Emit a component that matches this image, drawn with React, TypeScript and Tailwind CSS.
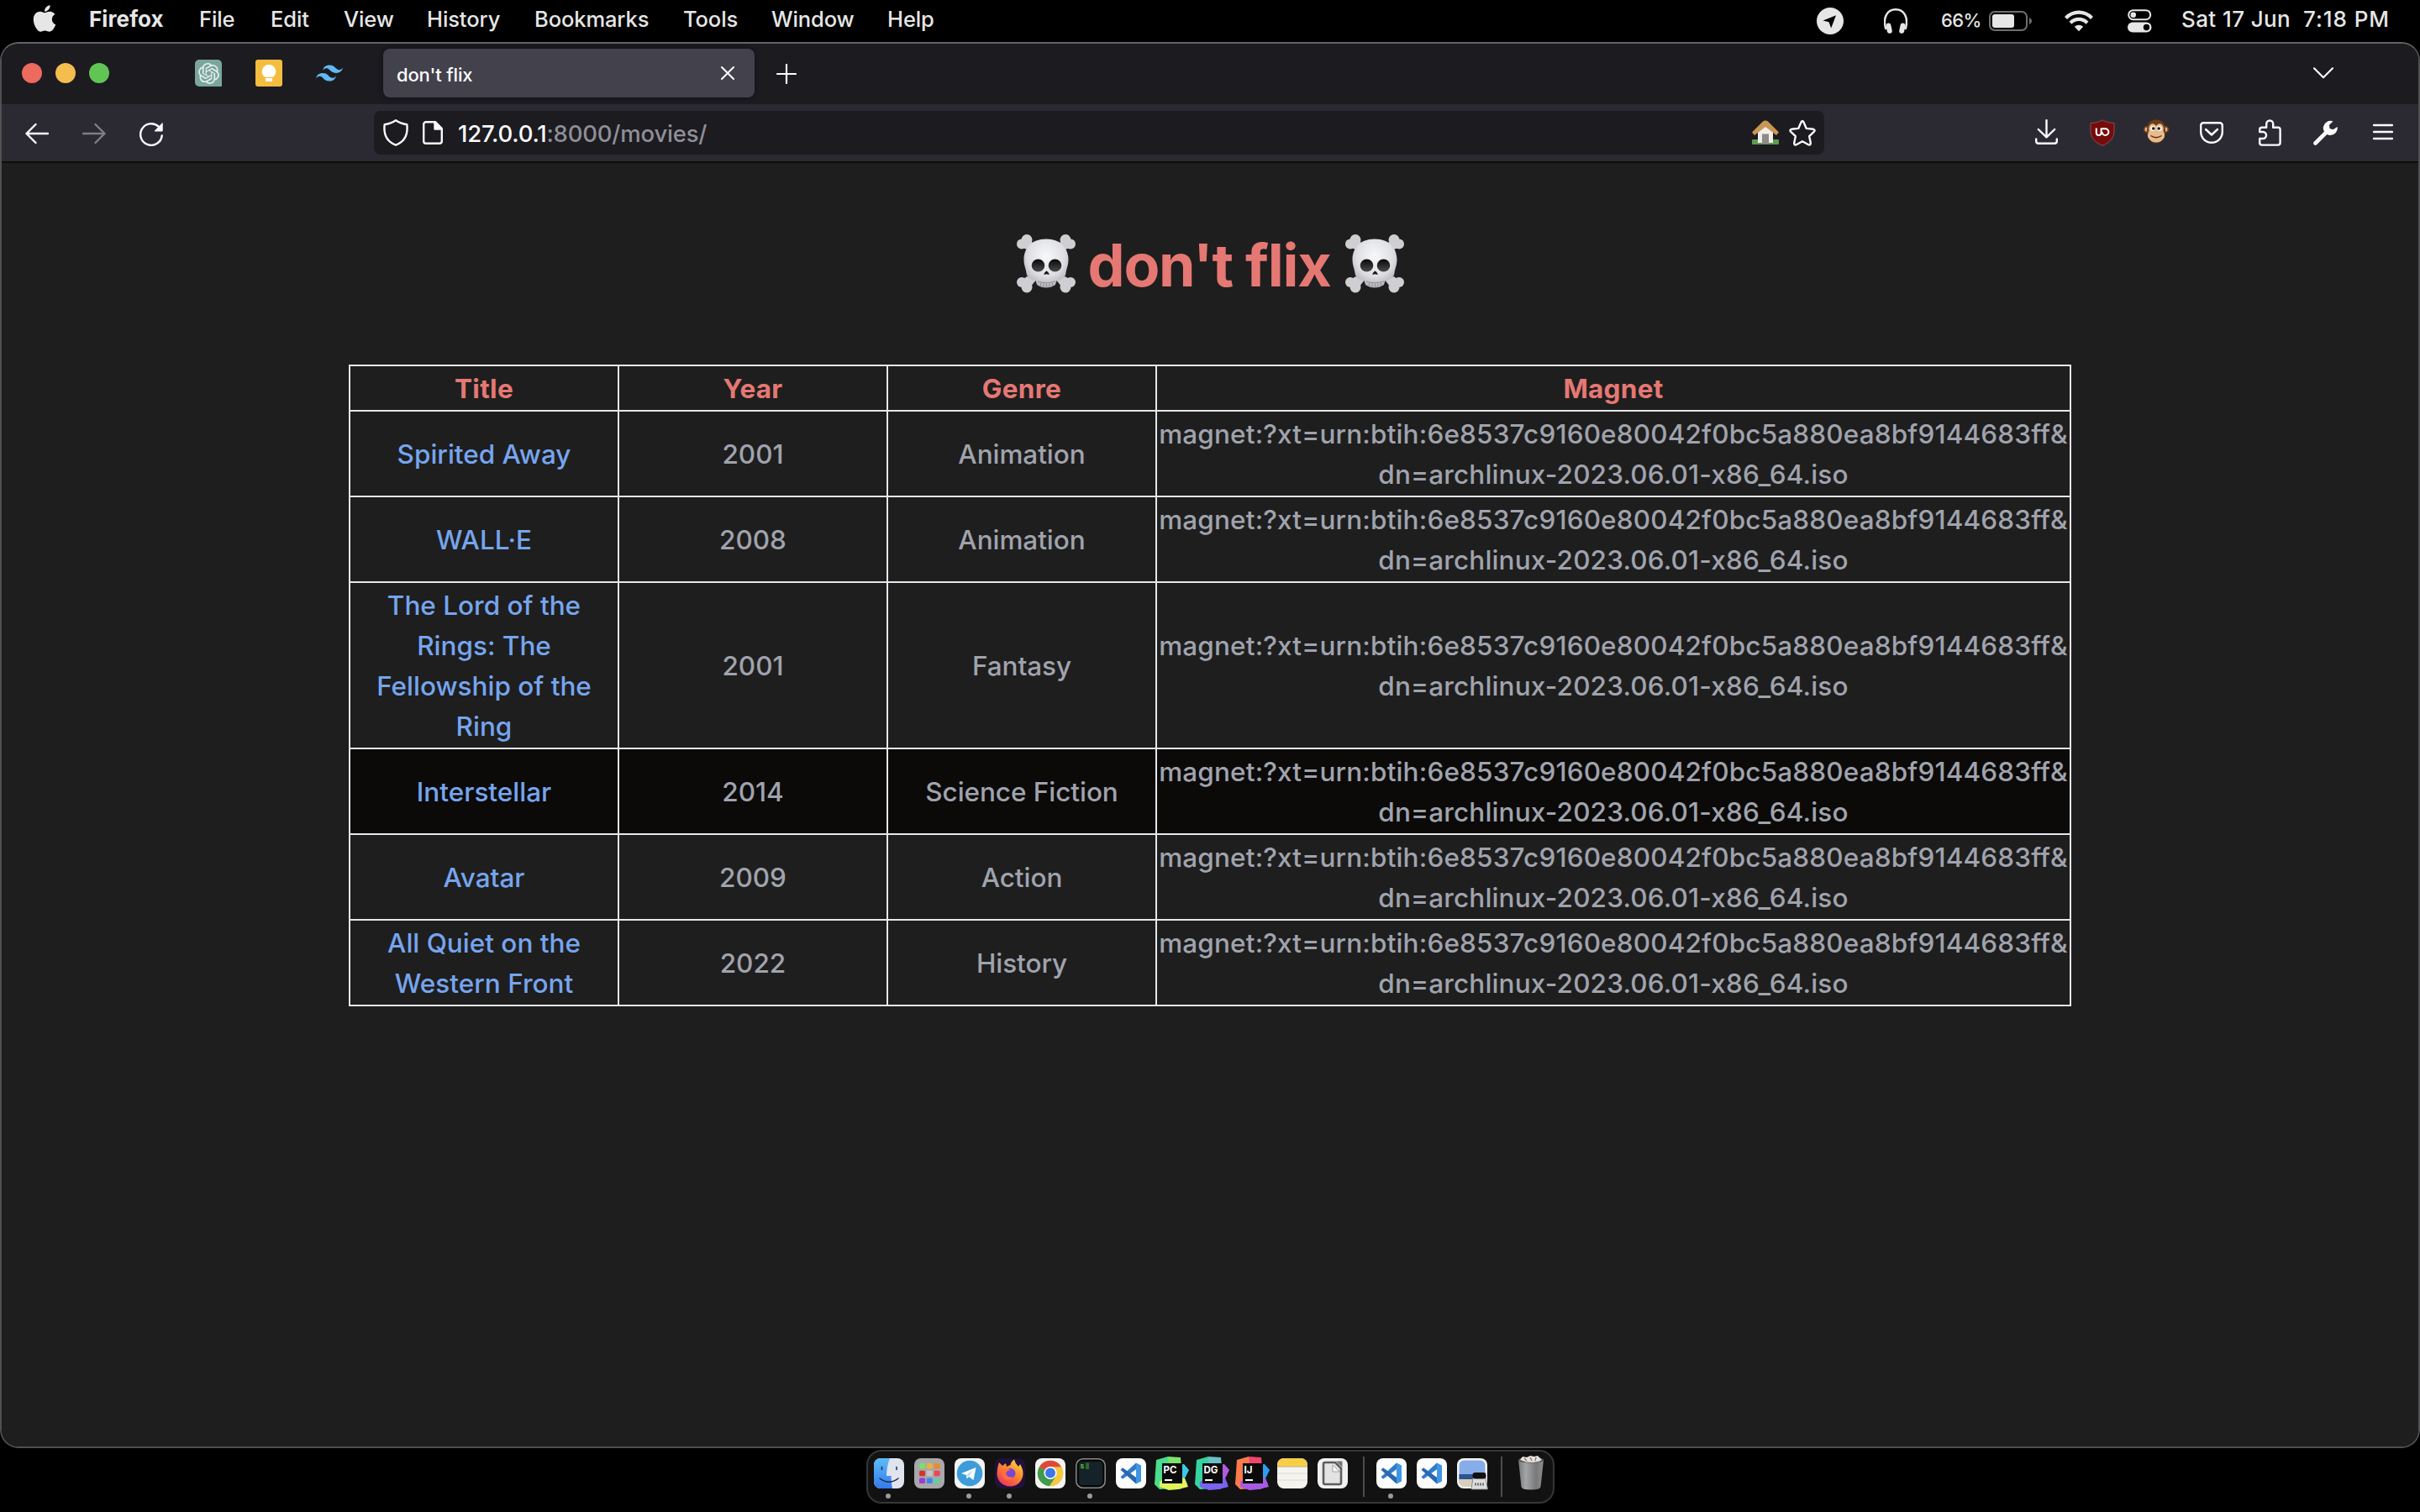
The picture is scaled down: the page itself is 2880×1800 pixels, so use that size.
import type { ReactNode } from "react";
import { FaApple } from "react-icons/fa";
import { SiOpenai, SiTailwindcss } from "react-icons/si";

const MENU: { label: string; cls: string }[] = [
  { label: "File", cls: "w-[85px]" },
  { label: "Edit", cls: "w-[87px]" },
  { label: "View", cls: "w-[99px]" },
  { label: "History", cls: "w-[128px]" },
  { label: "Bookmarks", cls: "w-[177px]" },
  { label: "Tools", cls: "w-[105px]" },
  { label: "Window", cls: "w-[138px]" },
  { label: "Help", cls: "w-[80px]" },
];

const MOVIES = [
  { title: "Spirited Away", year: "2001", genre: "Animation" },
  { title: "WALL·E", year: "2008", genre: "Animation" },
  { title: "The Lord of the Rings: The Fellowship of the Ring", year: "2001", genre: "Fantasy", tall: true },
  { title: "Interstellar", year: "2014", genre: "Science Fiction", active: true },
  { title: "Avatar", year: "2009", genre: "Action" },
  { title: "All Quiet on the Western Front", year: "2022", genre: "History" },
];

function Headphones() {
  return (
    <svg className="h-[30px] w-[28px]" viewBox="0 0 28 30" fill="none">
      <path d="M2.500 25C-2 11 4 1.300 14 1.300S30 11 25.500 25" stroke="#e6e6e6" strokeWidth="2.400" />
      <rect x="3.200" y="17.500" width="6" height="12.400" rx="3" transform="rotate(-12 6 24)" fill="#e6e6e6" />
      <rect x="18.800" y="17.500" width="6" height="12.400" rx="3" transform="rotate(12 22 24)" fill="#e6e6e6" />
    </svg>
  );
}

function Wifi() {
  return (
    <svg className="h-[26px] w-[34px]" viewBox="0 0 34 26" fill="none" stroke="#e6e6e6" strokeWidth="4.200">
      <path d="M1.500 9.500C10 .3 24 .3 32.500 9.500" />
      <path d="M7 15.300C12.500 9.500 21.500 9.500 27 15.300" />
      <path d="M17 25.300 11.800 19.800C14.800 17 19.200 17 22.200 19.800Z" fill="#e6e6e6" stroke="none" />
    </svg>
  );
}

function ControlCenter() {
  return (
    <svg className="h-[28px] w-[29px]" viewBox="0 0 29 28">
      <rect x="1.200" y="1.200" width="26" height="11" rx="5.500" fill="none" stroke="#e6e6e6" strokeWidth="2" />
      <circle cx="6.800" cy="6.700" r="3.300" fill="#e6e6e6" />
      <rect x="0" y="15.500" width="28.500" height="12" rx="6" fill="#e6e6e6" />
      <circle cx="22.500" cy="21.500" r="3.700" fill="#000" />
    </svg>
  );
}

function MenuBar() {
  return (
    <div className="flex h-[50px] shrink-0 items-center bg-black text-[25.500px] font-[450] leading-[46px] text-[#e6e6e6]">
      <FaApple className="mb-[6px] ml-[35px] h-[36px] w-[36px] shrink-0" />
      <span className="-mt-[4px] ml-[35px] w-[131px] text-[26px] font-bold tracking-[0.100px]">Firefox</span>
      {MENU.map((m) => (
        <span key={m.label} className={`${m.cls} -mt-[4px] shrink-0 whitespace-nowrap tracking-[-0.100px]`}>
          {m.label}
        </span>
      ))}
      <div className="ml-auto flex items-center">
        <svg className="h-[32px] w-[32px]" viewBox="0 0 32 32">
          <circle cx="16" cy="16" r="16" fill="#e6e6e6" />
          <path d="M23 9.200 7.500 15.500 14.500 17.300 17.200 24.600Z" fill="#000" />
        </svg>
        <div className="ml-[48px]">
          <Headphones />
        </div>
        <span className="-mt-[2px] ml-[40px] w-[57px] text-[22px] font-medium tracking-[-0.600px]">66%</span>
        <svg className="h-[24px] w-[52px]" viewBox="0 0 52 24">
          <rect x="1" y="1" width="44" height="22" rx="6" fill="none" stroke="#6e6e6e" strokeWidth="2" />
          <rect x="4" y="4" width="26" height="16" rx="3" fill="#e6e6e6" />
          <path d="M48 8C52 9.500 52 14.500 48 16Z" fill="#6e6e6e" />
        </svg>
        <div className="ml-[38px]">
          <Wifi />
        </div>
        <div className="ml-[41px]">
          <ControlCenter />
        </div>
        <span className="-mt-[4px] ml-[35px] w-[145px] whitespace-nowrap text-[26px] tracking-[0.400px]">Sat 17 Jun</span>
        <span className="-mt-[4px] w-[139px] whitespace-nowrap text-[26px] tracking-[0.950px]">7:18 PM</span>
      </div>
    </div>
  );
}

function TabBar() {
  return (
    <div className="flex h-[72px] items-center bg-[#1c1b20] pb-[2px]">
      <div className="ml-[24px] flex gap-[16px]">
        <span className="size-[24px] rounded-full bg-[#ed6a5e]" />
        <span className="size-[24px] rounded-full bg-[#f4be4f]" />
        <span className="size-[24px] rounded-full bg-[#61c554]" />
      </div>
      <div className="ml-[102px] flex size-[32px] items-center justify-center rounded-[5px] rounded-br-none bg-[#7ba69b]">
        <SiOpenai className="size-[25px] text-[#e4efec]" />
      </div>
      <svg className="ml-[40px] size-[32px]" viewBox="0 0 32 32">
        <rect width="32" height="32" rx="3" fill="#f4bd3f" />
        <path d="M16 6a8.200 8.200 0 0 1 5 14.700H11A8.200 8.200 0 0 1 16 6Z" fill="#fff" />
        <rect x="12" y="22" width="8" height="4" fill="#fff" />
      </svg>
      <SiTailwindcss className="ml-[40px] size-[32px] text-[#62b8f2]" />
      <div className="ml-[48px] flex h-[58px] w-[442px] items-center rounded-[8px] bg-[#42414c] shadow-[0_0_6px_rgba(0,0,0,0.4)]">
        <span className="ml-[16px] mt-[4px] text-[22px] font-[450] tracking-[-0.150px] text-[#fbfbfe]">don't flix</span>
        <svg className="ml-auto mr-[24px] size-[16px]" viewBox="0 0 16 16" stroke="#fbfbfe" strokeWidth="2" strokeLinecap="round">
          <path d="M1 1 15 15M15 1 1 15" />
        </svg>
      </div>
      <svg className="ml-[26px] mt-[2px] size-[24px]" viewBox="0 0 24 24" stroke="#fbfbfe" strokeWidth="2.200" strokeLinecap="round">
        <path d="M12 1V23M1 12H23" />
      </svg>
      <svg className="ml-auto mr-[101px] h-[14px] w-[24px]" viewBox="0 0 24 14" fill="none" stroke="#fbfbfe" strokeWidth="2.200" strokeLinecap="round" strokeLinejoin="round">
        <path d="M1 1.300 12 12.300 23 1.300" />
      </svg>
    </div>
  );
}

function NavBar() {
  const line = { fill: "none", stroke: "#fbfbfe", strokeWidth: 2.4, strokeLinecap: "round", strokeLinejoin: "round" } as const;
  return (
    <div className="flex h-[68px] items-center bg-[#2b2a33]">
      <svg className="ml-[28px] mt-[2px] h-[26px] w-[28px]" viewBox="0 0 28 26" {...line}>
        <path d="M27 13H1.500M12.500 2 1.500 13 12.500 24" />
      </svg>
      <svg className="ml-[40px] mt-[2px] h-[26px] w-[28px] opacity-40" viewBox="0 0 28 26" {...line}>
        <path d="M1 13H26.500M15.500 2 26.500 13 15.500 24" />
      </svg>
      <svg className="ml-[40px] mt-[4px] size-[28px]" viewBox="0 0 28 28" {...line}>
        <path d="M26.700 15.500A12.800 12.800 0 1 1 22.500 4.500" />
        <path d="M27.200 1V10H18.500Z" fill="#fbfbfe" strokeWidth="1" />
      </svg>
      <div className="ml-[251px] flex h-[52px] w-[1726px] items-center rounded-[8px] bg-[#1c1b20]">
        <svg className="ml-[11px] h-[32px] w-[30px]" viewBox="0 0 30 32" {...line}>
          <path d="M15 1.300C19.500 4.500 23.500 5.600 28.300 6.300C29.600 17 26 26.500 15 30.700C4 26.500.4 17 1.700 6.300C6.500 5.600 10.500 4.500 15 1.300Z" />
        </svg>
        <svg className="ml-[17px] h-[28px] w-[24px]" viewBox="0 0 24 28" {...line}>
          <path d="M4 1.200H15L22.800 9V24a2.800 2.800 0 0 1-2.800 2.800H4A2.800 2.800 0 0 1 1.200 24V4A2.800 2.800 0 0 1 4 1.200Z" />
          <path d="M14.500 1.500V9.500H22.500Z" fill="#fbfbfe" />
        </svg>
        <span className="ml-[18px] mt-[4px] text-[27.500px] font-[450] tracking-[-0.200px] text-[#8f8f98]">
          <span className="text-[#fbfbfe]">127.0.0.1</span>:8000/movies/
        </span>
        <svg className="ml-auto h-[30px] w-[32px]" viewBox="0 0 32 30">
          <rect y="23" width="32" height="6" rx="1" fill="#5f9a50" />
          <path d="M7 13 16 6 25 13V27H7Z" fill="#f1efec" />
          <rect x="12" y="16.500" width="8" height="12" fill="#8d8a88" />
          <path d="M0 14.500 13 1.500Q16 -.5 19 1.500L32 14.500 29 18 16 8 3 18Z" fill="#c99654" />
        </svg>
        <svg className="ml-[12px] mr-[10px] h-[31px] w-[32px]" viewBox="0 0 32 31" {...line}>
          <path d="M14.600 2.200Q16 .3 17.400 2.200L20.800 9.900 29 10.800Q31.500 11.500 30 13.600L24.200 19.200 25.800 27.300Q25.800 30.200 23.200 29.200L16 25.200 8.800 29.200Q6.200 30.200 6.200 27.300L7.800 19.200 2 13.600Q.5 11.500 3 10.800L11.200 9.900Z" />
        </svg>
      </div>
      <svg className="-mt-[2px] ml-[251px] h-[30px] w-[27px] shrink-0" viewBox="0 0 27 30" {...line}>
        <path d="M13.500 1.200V21M3.800 12 13.500 21.300 23.200 12M1.200 23.500V26a2.800 2.800 0 0 0 2.800 2.800H23A2.800 2.800 0 0 0 25.800 26V23.500" />
      </svg>
      <svg className="ml-[38px] h-[32px] w-[30px] shrink-0" viewBox="0 0 30 32">
        <path d="M15 .8C19 3.400 23 4.200 29 4.500V14C29 22 24 27.500 15 31.300C6 27.500 1 22 1 14V4.500C7 4.200 11 3.400 15 .8Z" fill="#750c0c" stroke="#8f4a4f" strokeWidth="1" />
        <path d="M7.800 10.500V16a2.800 3 0 0 0 5.800 0V10.500M13.600 11.200H18.500a3.900 3.900 0 1 1-3.900 3.900" fill="none" stroke="#fff" strokeWidth="2" />
      </svg>
      <svg className="-mt-[2px] ml-[34px] h-[30px] w-[30px] shrink-0" viewBox="0 0 30 30">
        <circle cx="4" cy="12" r="4" fill="#7a451a" />
        <circle cx="26" cy="12" r="4" fill="#7a451a" />
        <circle cx="4.200" cy="12" r="2.600" fill="#e9b583" />
        <circle cx="25.800" cy="12" r="2.600" fill="#e9b583" />
        <path d="M15 .5C24 .5 26 7 26 14S22 28.500 15 28.500 4 21 4 14 6 .5 15 .5Z" fill="#6d3c15" />
        <path d="M15 8Q18 3.500 22 6.500 24.500 9 23.500 14 26 18 24.500 22 21 27.500 15 27.500T5.500 22Q4 18 6.500 14 5.500 9 8 6.500 12 3.500 15 8Z" fill="#e9bb8c" />
        <circle cx="11.200" cy="11" r="3" fill="#fff" />
        <circle cx="18.800" cy="11" r="3" fill="#fff" />
        <circle cx="11.800" cy="11" r="1.800" fill="#111" />
        <circle cx="18.200" cy="11" r="1.800" fill="#111" />
        <path d="M8.500 19.500Q15 24 21.500 19.500" stroke="#5b3010" strokeWidth="1.300" fill="none" />
      </svg>
      <svg className="ml-[37px] h-[26px] w-[28px] shrink-0" viewBox="0 0 28 26" {...line}>
        <path d="M4.200 1.300H23.800a3 3 0 0 1 3 3V12A12.800 12.800 0 0 1 1.200 12V4.300a3 3 0 0 1 3-3ZM7 9 14 15.500 21 9" />
      </svg>
      <svg className="ml-[42px] h-[32px] w-[27px] shrink-0" viewBox="0 0 27 32" {...line}>
        <path d="M3.500 9.700H9.200V5.500a4 4 0 0 1 8 0V9.700H23a2.600 2.600 0 0 1 2.600 2.600V28a2.600 2.600 0 0 1-2.600 2.600H3.800A2.600 2.600 0 0 1 1.200 28V23H5a4 4 0 0 0 0-8H1.200V12.300A2.600 2.600 0 0 1 3.500 9.700Z" />
      </svg>
      <svg className="ml-[38px] h-[30px] w-[30px] shrink-0" viewBox="0 0 30 30">
        <path d="M2.500 27.500 17 13" stroke="#fbfbfe" strokeWidth="4.600" strokeLinecap="round" />
        <path d="M23.500 1.500A8.500 8.500 0 1 0 28.700 8L23.500 11.300 19.500 10 19 5.700Z" fill="#fbfbfe" />
      </svg>
      <svg className="-mt-[2px] ml-[41px] h-[20px] w-[24px] shrink-0" viewBox="0 0 24 20" {...line}>
        <path d="M1 2H23M1 10H23M1 18H23" />
      </svg>
    </div>
  );
}

function Skull() {
  return (
    <svg className="size-[72px]" viewBox="0 0 72 72">
      <defs>
        <radialGradient id="skull" cx=".5" cy=".35" r=".7">
          <stop offset="0" stopColor="#f6f8fa" />
          <stop offset=".6" stopColor="#dedee2" />
          <stop offset="1" stopColor="#a5a5aa" />
        </radialGradient>
        <linearGradient id="eye" x1="0" y1="0" x2="0" y2="1">
          <stop offset="0" stopColor="#080808" />
          <stop offset="1" stopColor="#4b4b4d" />
        </linearGradient>
      </defs>
      <g stroke="#c6c6ca" strokeWidth="9">
        <path d="M13 12 59 61M59 12 13 61" />
      </g>
      <g fill="#cfcfd3">
        <circle cx="13" cy="7.500" r="6.500" /><circle cx="7" cy="12.500" r="6" /><circle cx="14" cy="13" r="6" />
        <circle cx="59" cy="7.500" r="6.500" /><circle cx="65" cy="12.500" r="6" /><circle cx="58" cy="13" r="6" />
        <circle cx="13" cy="64" r="6.500" /><circle cx="7" cy="58" r="6" /><circle cx="15" cy="57" r="6" />
        <circle cx="59" cy="64" r="6.500" /><circle cx="65" cy="58" r="6" /><circle cx="57" cy="57" r="6" />
      </g>
      <path d="M36 6.500C54 6.500 62.500 18 62.500 31C62.500 38 60 42 59.500 47C59 52.500 54 55 48.500 56L47 61Q42 64.500 36 64.500T25 61L23.500 56C18 55 13 52.500 12.500 47C12 42 9.500 38 9.500 31C9.500 18 18 6.500 36 6.500Z" fill="url(#skull)" />
      <ellipse cx="26.500" cy="38" rx="7.800" ry="7.500" fill="url(#eye)" />
      <ellipse cx="46.500" cy="38" rx="7.800" ry="7.500" fill="url(#eye)" />
      <path d="M36.500 44.500Q40 47 39.500 49L36.500 48.300 33.500 49Q33 47 36.500 44.500Z" fill="#161616" />
      <path d="M26 57Q36 60.500 47 57M29.500 59V62.500M33 59.500V63.500M36.500 59.500V63.500M40 59.500V63.500M43.500 59V62.500" stroke="#909094" strokeWidth="1" fill="none" />
    </svg>
  );
}

function Page() {
  const cell = "border-2 border-[#e5e7eb] px-0 pb-0 pt-[2px] text-center align-middle";
  return (
    <div className="flex flex-1 flex-col items-center border-t-2 border-[#0c0c0d] bg-[#1e1e1e] text-[31.500px] font-[450] leading-[48px] text-[#a0a3ad]">
      <h1 className="mt-[80px] flex h-[80px] items-center text-[70px] font-bold text-[#e57873]">
        <Skull />
        <span className="ml-[14px] mr-[18px] mt-[3px] w-[287px] whitespace-nowrap tracking-[-1.250px]">don't flix</span>
        <Skull />
      </h1>
      <table className="mt-[80px] w-[2050px] table-fixed border-collapse">
        <colgroup>
          <col className="w-[320px]" />
          <col className="w-[320px]" />
          <col className="w-[320px]" />
          <col className="w-[1088px]" />
        </colgroup>
        <thead>
          <tr className="h-[54px] text-[#e57873]">
            {["Title", "Year", "Genre", "Magnet"].map((h) => (
              <th key={h} className={`${cell} font-bold tracking-[0.300px]`}>{h}</th>
            ))}
          </tr>
        </thead>
        <tbody>
          {MOVIES.map((m) => (
            <tr key={m.title} className={`${m.tall ? "h-[198px]" : "h-[102px]"} ${m.active ? "bg-[#0b0a09]" : ""}`}>
              <td className={`${cell} text-[#76a5ee]`}>
                <div className="mx-auto w-[272px]">{m.title}</div>
              </td>
              <td className={cell}>{m.year}</td>
              <td className={`${cell} tracking-[-0.050px]`}>{m.genre}</td>
              <td className={`${cell} whitespace-nowrap tracking-[0.150px]`}>
                magnet:?xt=urn:btih:6e8537c9160e80042f0bc5a880ea8bf9144683ff&amp;
                <br />
                dn=archlinux-2023.06.01-x86_64.iso
              </td>
            </tr>
          ))}
        </tbody>
      </table>
    </div>
  );
}

function DockItem({ children, running }: { children: ReactNode; running?: boolean }) {
  return (
    <div className="relative flex h-[59px] w-[48px] shrink-0 items-start justify-center pt-[8px]">
      {children}
      {running && <span className="absolute bottom-[3px] left-[20px] size-[6px] rounded-full bg-[#9b9b9b]" />}
    </div>
  );
}

function Tile({ children }: { children: ReactNode }) {
  return (
    <svg className="size-[36px] overflow-visible" viewBox="0 0 36 36">
      {children}
    </svg>
  );
}

function VsCode() {
  return (
    <Tile>
      <rect width="36" height="36" rx="8" fill="#fdfdfd" />
      <path d="M24 5.500 5.500 22.300 8 24.800 25 12.500Z" fill="#2f7ccc" />
      <path d="M24 30.500 5.500 13.700 8 11.200 25 23.500Z" fill="#2a68b0" />
      <path d="M24 5.500 30 8.500V27.500L24 30.500Z" fill="#3f96e4" />
    </Tile>
  );
}

function JetBrains({ text, a, b, c, d }: { text: string; a: string; b: string; c: string; d: string }) {
  return (
    <Tile>
      <path d="M0 2 14 -2 20 8 18 36 4 37-2 31Z" fill={a} />
      <path d="M14-2 29-1 30 10 16 14Z" fill={b} />
      <path d="M24 8 33 7 39 14 34 24 37 31 28 37 22 34Z" fill={d} />
      <path d="M4 28 18 20 34 24 38 34 26 37 15 38 4 34Z" fill={c} />
      <rect x="7" y="6" width="24" height="24" fill="#0a0a0a" />
      <text x="8.500" y="18" fontSize="11.500" fontWeight="700" fill="#fff" fontFamily="Inter, sans-serif">{text}</text>
      <rect x="10" y="25" width="9" height="2" fill="#fff" />
    </Tile>
  );
}

const PADS = ["#72e36a", "#f0b03c", "#ee8a2c", "#d6332b", "#c4c4c4", "#ee4458", "#9a3fd0", "#3d86ee", "#62cfa0"];

function Dock() {
  return (
    <div className="mx-auto mt-[2px] flex h-[64px] w-[819px] shrink-0 rounded-[18px] border-2 border-[#363636] bg-[#121212] pl-[1px]">
      <DockItem running>
        <Tile>
          <defs>
            <linearGradient id="fl" x1="0" y1="0" x2="0" y2="1"><stop stopColor="#5bbcf8" /><stop offset="1" stopColor="#3479ee" /></linearGradient>
          </defs>
          <rect width="36" height="36" rx="8" fill="#dfe4ee" />
          <path d="M8 0H19Q15 10 15 21H20.500Q20.500 29 22 36H8A8 8 0 0 1 0 28V8A8 8 0 0 1 8 0Z" fill="url(#fl)" />
          <path d="M9.500 10.500V13.500M27 10.500V13.500M7 24Q18 32.500 29 24" stroke="#1d2c45" strokeWidth="1.500" strokeLinecap="round" fill="none" />
        </Tile>
      </DockItem>
      <DockItem>
        <Tile>
          <rect width="36" height="36" rx="8" fill="#a8a8aa" />
          {PADS.map((p, i) => (
            <rect key={p} x={6 + (i % 3) * 8.800} y={6 + Math.floor(i / 3) * 8.800} width="7" height="6.500" rx="1.500" fill={p} />
          ))}
        </Tile>
      </DockItem>
      <DockItem running>
        <Tile>
          <rect width="36" height="36" rx="8" fill="#f4f4f4" />
          <circle cx="18" cy="18" r="15.300" fill="#3d9ddb" />
          <path d="M8 18 25.500 11 22.500 26 17 22 14.500 24.500 14 20Z" fill="#fff" />
          <path d="M14 20 22 14 17 21.500Z" fill="#b9d9ee" />
        </Tile>
      </DockItem>
      <DockItem running>
        <Tile>
          <defs>
            <linearGradient id="ff" x1=".9" y1="0" x2=".2" y2="1"><stop stopColor="#ffe14a" /><stop offset=".45" stopColor="#ff8a2b" /><stop offset="1" stopColor="#ec2e62" /></linearGradient>
          </defs>
          <rect width="36" height="36" rx="8" fill="#20123a" />
          <path d="M5 5 9 9 13 6 14 10Q18 8 18.500 8 19 4 23 1.500 24 6 28 10L30 7Q34 14 33.500 19C33 27.500 26.500 33.500 18 33.500S2.500 27 2.500 18.500Q2.500 11 5 5Z" fill="url(#ff)" />
          <circle cx="18.500" cy="18" r="6" fill="#7b46d8" />
          <path d="M8 13Q14 11 18.500 14 14 15 13 18 15 24 22 22 17 28 11 24 7 19 8 13Z" fill="#ff7139" />
        </Tile>
      </DockItem>
      <DockItem>
        <Tile>
          <rect width="36" height="36" rx="8" fill="#f4f4f4" />
          <circle cx="18" cy="18" r="15.200" fill="#f7c942" />
          <path d="M18 18 4.800 10.400A15.200 15.200 0 0 1 31.200 10.400H18Z" fill="#dd4a3d" />
          <path d="M18 18 4.800 10.400A15.200 15.200 0 0 0 17 33.200L24.500 22Z" fill="#3f9b4f" />
          <path d="M17.500 10.400H31.200A15.200 15.200 0 0 1 17 33.200L24.600 21.800Z" fill="#f7c942" />
          <circle cx="18" cy="17.500" r="7.600" fill="#fff" />
          <circle cx="18" cy="17.500" r="6" fill="#3a78e8" />
        </Tile>
      </DockItem>
      <DockItem running>
        <Tile>
          <rect x=".8" y=".8" width="34.400" height="34.400" rx="8" fill="#050808" stroke="#8a8a8a" strokeWidth="1.500" />
          <rect x="4" y="4" width="28" height="28" rx="4" fill="#16222a" />
          <text x="5.500" y="12" fontSize="8" fontWeight="700" fill="#4fc23b" fontFamily="Liberation Mono, monospace">$</text>
          <rect x="12" y="5.500" width="4" height="7.500" fill="#2d6a2a" />
        </Tile>
      </DockItem>
      <DockItem><VsCode /></DockItem>
      <DockItem><JetBrains text="PC" a="#4bdc8e" b="#7fe36a" c="#e4f25a" d="#3cc9e8" /></DockItem>
      <DockItem><JetBrains text="DG" a="#35d3a0" b="#6ec0c8" c="#7a63ee" d="#b05ce0" /></DockItem>
      <DockItem><JetBrains text="IJ" a="#fb7a4b" b="#f0456e" c="#a65be0" d="#2f9df0" /></DockItem>
      <DockItem>
        <Tile>
          <rect width="36" height="36" rx="8" fill="#f5f3ee" />
          <path d="M8 0H28A8 8 0 0 1 36 8V9.500H0V8A8 8 0 0 1 8 0Z" fill="#f8cd46" />
          <path d="M0 10H36" stroke="#b9a56a" strokeWidth="1" />
          <path d="M0 18H36M0 26H36" stroke="#dcdad4" strokeWidth="1" />
        </Tile>
      </DockItem>
      <DockItem>
        <Tile>
          <rect width="36" height="36" rx="8" fill="#f1f1f1" />
          <path d="M9 5H21L28 12V29Q28 31 26 31H9Q7 31 7 29V7Q7 5 9 5Z" fill="#e3e3e3" stroke="#5d5d5d" strokeWidth="2.600" />
          <path d="M18 8V16H26Z" fill="#fff" stroke="#8a8a8a" strokeWidth=".8" />
          <path d="M22 3.500H29.500V11Z" fill="#777" />
        </Tile>
      </DockItem>
      <div className="ml-[12px] mr-[8px] mt-[6px] h-[48px] w-[2px] bg-[#4d4d4d]" />
      <DockItem running><VsCode /></DockItem>
      <DockItem><VsCode /></DockItem>
      <DockItem>
        <Tile>
          <rect width="36" height="36" rx="8" fill="#f4f4f4" />
          <rect x="2.500" y="2.500" width="31" height="31" rx="6" fill="#87ade8" />
          <rect x="2.500" y="19" width="31" height="6" fill="#2b5490" />
          <path d="M2.500 25H33.500V28a6 6 0 0 1-6 6H8.500a6 6 0 0 1-6-6Z" fill="#d9cdbb" />
          <path d="M19 23H34L36.500 37H17Z" fill="#dcdcdc" stroke="#777" strokeWidth=".8" />
          <rect x="18.500" y="17" width="16" height="7.500" rx="3" fill="#111" />
          <path d="M21 31H32" stroke="#777" strokeWidth="3" strokeDasharray="2 1" />
        </Tile>
      </DockItem>
      <div className="ml-[10px] mr-[10px] mt-[6px] h-[48px] w-[2px] bg-[#4d4d4d]" />
      <DockItem>
        <Tile>
          <defs>
            <linearGradient id="bin"><stop stopColor="#77797b" /><stop offset=".3" stopColor="#a3a5a6" /><stop offset=".7" stopColor="#77797b" /><stop offset="1" stopColor="#8e9091" /></linearGradient>
          </defs>
          <path d="M3 1.500H33L29.500 34Q29 37.500 18 37.500T6.500 34Z" fill="url(#bin)" />
          <ellipse cx="18" cy="2" rx="15" ry="3.500" fill="#4d4f50" />
          <path d="M5 2 8-2 13-1 17-3 22-2 26-3 31 2 27 4 20 5 12 4.500Z" fill="#e4e2df" />
          <path d="M10 0 13 3M17-1 19 3M24-1 23 3" stroke="#8a6a5a" strokeWidth="1.200" />
        </Tile>
      </DockItem>
    </div>
  );
}

export default function App() {
  return (
    <div className="flex h-[1800px] w-[2880px] flex-col overflow-hidden bg-black font-['Inter',sans-serif]">
      <MenuBar />
      <div className="flex h-[1674px] shrink-0 flex-col overflow-hidden rounded-[22px] border-2 border-[#505052] border-t-[#646466]">
        <TabBar />
        <NavBar />
        <Page />
      </div>
      <Dock />
    </div>
  );
}
